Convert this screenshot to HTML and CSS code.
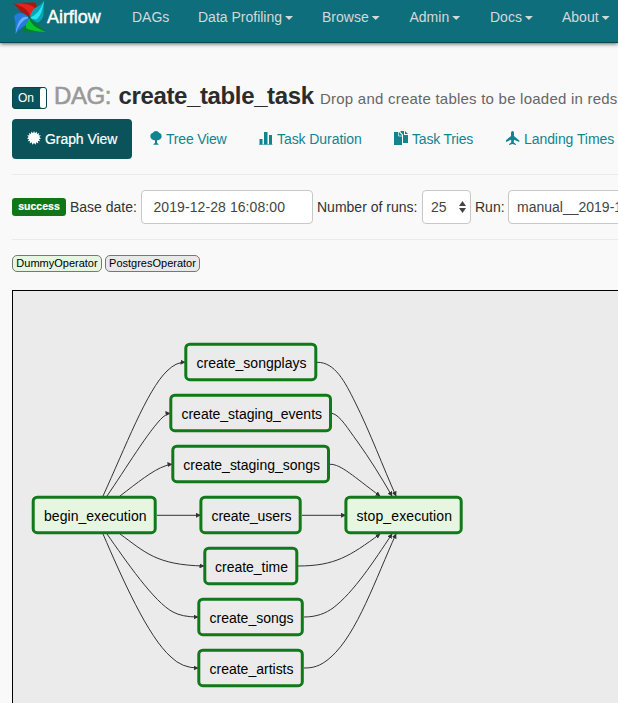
FILE: index.html
```html
<!DOCTYPE html>
<html lang="en">
<head>
<meta charset="utf-8">
<title>Airflow - DAGs</title>
<link rel="stylesheet" href="styles.css">
</head>
<body>
<nav class="navbar">
  <a class="brand"><svg class="logo" width="34" height="35" viewBox="0 0 34 35">
    <path d="M0 3L22 2.500Q25 7 23 11L16.500 17.500Q12 13 8 12Q5 7 0 3z" fill="#a81713"/>
    <path d="M0 3Q15 3 21 7Q24 10 16.500 17.500Q18 9 0 3z" fill="#e1251e"/>
    <path d="M31 1L30.500 15Q29 21 24 23L16.500 17.500Q19 10 22 8Q27 6 31 1z" fill="#0aa5b5"/>
    <path d="M31 1Q29 15 24 19Q20 20 16.500 17.500Q26 15 31 1z" fill="#25e4ef"/>
    <path d="M33 32L12 32.500Q9 30 10 25L16.500 17.500Q20 22 25 23Q28 28 33 32z" fill="#087c37"/>
    <path d="M33 32Q17 31 13 28Q12 23 16.500 17.500Q17 26 33 32z" fill="#05c72d"/>
    <path d="M2.500 34V23L1 16Q5 11 11 14L16.500 17.500Q14 25 10 27Q6 29 2.500 34z" fill="#237bdc"/>
    <path d="M2.500 34Q4 22 9 18Q12 16 16.500 17.500Q6 21 2.500 34z" fill="#69b0fa"/>
    <circle cx="16.500" cy="17.500" r="1.200" fill="#07595f"/>
  </svg><span class="brand-name">Airflow</span></a>
  <ul class="menu">
    <li class="m-dags">DAGs</li>
    <li class="m-profiling">Data Profiling<i class="caret"></i></li>
    <li class="m-browse">Browse<i class="caret"></i></li>
    <li class="m-admin">Admin<i class="caret"></i></li>
    <li class="m-docs">Docs<i class="caret"></i></li>
    <li>About<i class="caret"></i></li>
  </ul>
</nav>
<main class="content">
  <header class="heading">
    <span class="toggle"><span class="toggle-on">On</span><span class="toggle-knob"></span></span>
    <h1><span class="muted">DAG:</span> <span class="dag-name">create_table_task</span></h1>
    <span class="description">Drop and create tables to be loaded in redshift</span>
  </header>
  <ul class="tabs">
    <li class="tab active"><svg width="14" height="14" viewBox="0 0 14 14"><path d="M7 0L8 2.300 9.700.6 10 3 12.200 2 11.500 4.300 14 4.400 12.200 6.100 14 7.500 11.900 8.200 13.300 10.200 10.900 10.100 11.300 12.500 9.200 11.300 8.600 13.700 7 11.900 5.400 13.700 4.800 11.300 2.700 12.500 3.100 10.100.7 10.200 2.100 8.200 0 7.500 1.800 6.100 0 4.400 2.500 4.300 1.800 2 4 3 4.300.6 6 2.300z"/></svg>Graph View</li>
    <li class="tab tree"><svg width="12" height="14" viewBox="0 0 12 14"><path d="M6 0c1.500 0 2.500.8 3 1.800C10.800 2.300 12 4 11.600 6 11.200 8 9 9.500 7 9.200V12l1.500 1v.8h-5V13L5 12V9.200C3 9.500.8 8 .4 6 0 4 1.200 2.300 3 1.800 3.500.8 4.500 0 6 0z"/></svg>Tree View</li>
    <li class="tab duration"><svg width="14" height="14" viewBox="0 0 14 14"><path d="M.5 8h3v5.500h-3zM5 1h3.500v12.500H5zM10 4h3v9.500h-3z"/><path opacity=".5" d="M0 13h13.500v1H0z"/></svg>Task Duration</li>
    <li class="tab tries"><svg width="14" height="14" viewBox="0 0 14 14"><path d="M0 1h5l3 3v10H0zM6.500 0H10v4h4v8H9V3.500L6.500 1z"/><path d="M11 0l3 3h-3z"/><path class="fold" d="M4.500 1v4H8M10.500 0v3.500H14"/></svg>Task Tries</li>
    <li class="tab landing"><svg width="14" height="14" viewBox="0 0 14 14"><path d="M6.500 0c1 0 1.500 1 1.500 2v3l5.300 4.500V11L8 8.800l-.3 2.500 2.300 2V14l-3.500-1L3 14v-.7l2.300-2L5 8.800-.2 11V9.500L5 5V2c0-1 .5-2 1.500-2z"/></svg>Landing Times</li>
  </ul>
  <form class="filters">
    <span class="state">success</span>
    <label class="l-date">Base date:</label><span class="field date">2019-12-28 16:08:00</span>
    <label class="l-runs">Number of runs:</label><span class="field runs">25<svg width="7" height="12" viewBox="0 0 7 12"><path d="M0 5L3.500 0 7 5zM0 7h7L3.500 12z"/></svg></span>
    <label class="l-run">Run:</label><span class="field run">manual__2019-12-28T16:08:00</span>
  </form>
  <div class="legend">
    <span class="operator dummy">DummyOperator</span>
    <span class="operator postgres">PostgresOperator</span>
  </div>
  <div class="graph">
    <svg width="605" height="412" viewBox="13 291 605 412">
      <defs><marker id="arrow" viewBox="0 0 10 10" refX="9" refY="5" markerWidth="5" markerHeight="5" markerUnits="userSpaceOnUse" orient="auto"><path d="M0 0L10 5 0 10z" fill="#333"/></marker></defs>
      <g class="edges">
        <path d="M103 496C125 448 147 390 167 371Q176 362 185 362.300"/>
        <path d="M107 496C125 470 149 430 163 417Q167 413.500 170 413.300"/>
        <path d="M120 496C137 483 153 470 165 466Q169 464.500 172 464.300"/>
        <path d="M157 515.300H200.500"/>
        <path d="M120 534C145 552 156 565 204 566"/>
        <path d="M107 534C126 561 154 602 173 612Q182 617 198 617"/>
        <path d="M103 534C122 578 148 637 171 657Q182 668 198 668"/>
        <path d="M317 362.300C335 362 345 382 355 402C370 432 383 467 396 496"/>
        <path d="M332 413.300C340 415 348 429 357 441C370 459 381 477 392 496"/>
        <path d="M330 464.300C341 464 354 477 380 496"/>
        <path d="M302 515.300H345.500"/>
        <path d="M298 566C335 566 350 556 380 534"/>
        <path d="M304 617C317 617 326 613 333 608C354 592 374 561 392 534"/>
        <path d="M304 668C312 668 320 667 331 657C357 634 376 578 396 534"/>
      </g>
      <g class="nodes">
        <rect class="begin" x="33.200" y="497.200" width="122" height="35.500" rx="4"/>
        <rect x="185.800" y="344.200" width="130" height="35.500" rx="4"/>
        <rect x="170.800" y="395.200" width="159.700" height="35.500" rx="4"/>
        <rect x="172.800" y="446.200" width="155.700" height="35.500" rx="4"/>
        <rect x="200.900" y="497.200" width="99.300" height="35.500" rx="4"/>
        <rect x="204.800" y="548.200" width="92" height="35.500" rx="4"/>
        <rect x="198.800" y="599.200" width="103.500" height="35.500" rx="4"/>
        <rect x="198.800" y="650.200" width="103.500" height="35.500" rx="4"/>
        <rect class="begin" x="345.900" y="497.200" width="115.300" height="35.500" rx="4"/>
      </g>
      <g class="labels">
        <text x="44" y="521" textLength="102.500">begin_execution</text>
        <text x="196.500" y="368" textLength="110">create_songplays</text>
        <text x="181.500" y="419" textLength="140.500">create_staging_events</text>
        <text x="183.300" y="470" textLength="136.700">create_staging_songs</text>
        <text x="211.500" y="521" textLength="80">create_users</text>
        <text x="215" y="572" textLength="73">create_time</text>
        <text x="209.500" y="623" textLength="84">create_songs</text>
        <text x="209.500" y="674" textLength="84">create_artists</text>
        <text x="356.500" y="521" textLength="95.500">stop_execution</text>
      </g>
    </svg>
  </div>
</main>
</body>
</html>
```
FILE: styles.css
```css
* { box-sizing: border-box; }
body { margin: 0; width: 618px; height: 703px; overflow: hidden; background: #f9f9f9; color: #333; font: 14px/20px "Liberation Sans", Arial, sans-serif; white-space: nowrap; }
ul { list-style: none; margin: 0; padding: 0; }
.navbar { display: flex; height: 43px; background: #0f6e7b; border-bottom: 1px solid #084853; box-shadow: 0 1px 4px rgba(50, 25, 25, .7); }
.brand { display: flex; width: 132px; padding-left: 13px; flex: none; color: #fff; }
.logo { flex: none; }
.brand-name { font-size: 18px; line-height: 34px; -webkit-text-stroke: .4px; letter-spacing: -.05px; }
.menu { display: flex; padding-top: 7px; color: #d3d9da; }
.menu li { flex: none; display: flex; }
.m-dags { width: 66px; }
.m-profiling { width: 124px; }
.m-browse { width: 87.500px; }
.m-admin { width: 80.500px; }
.m-docs { width: 72px; }
.caret { width: 8px; height: 4px; margin: 9px 0 0 3px; background: currentColor; clip-path: polygon(0 0, 100% 0, 50% 100%); }
.content { padding-left: 12px; overflow: hidden; padding-top: 39px; }
.heading { display: flex; height: 37px; }
.toggle { display: flex; flex: none; width: 35px; height: 22px; margin-top: 5px; background: #0a535b; border: 1px solid #06454d; border-radius: 3px; color: #fff; font-size: 12px; line-height: 20px; }
.toggle-on { width: 27px; padding-left: 5px; }
.toggle-knob { width: 6px; background: #fff; border-radius: 2px; }
h1 { display: flex; width: 266px; flex: none; margin: 0 0 0 7px; font-size: 24px; line-height: 28px; font-weight: 400; }
.muted { width: 64.500px; color: #999; -webkit-text-stroke: .6px; letter-spacing: -.4px; }
.dag-name { font-weight: 700; font-size: 24px; letter-spacing: -.37px; color: #2b2b2b; }
.description { font-size: 15px; line-height: 34px; letter-spacing: .23px; color: #666; }
.tabs { display: flex; height: 40px; color: #108491; }
.tab { display: flex; align-items: center; gap: 4px; flex: none; letter-spacing: -.07px; }
.tab svg { fill: currentColor; margin-top: -2px; }
.active { width: 120px; padding-left: 15px; background: #0a535b; color: #fff; border-radius: 4px; -webkit-text-stroke: .2px; }
.tree { width: 127px; padding-left: 18px; letter-spacing: -.2px; }
.duration { width: 134px; }
.tries { width: 112px; padding-left: 1px; letter-spacing: -.2px; }
.landing { padding-left: 1px; }
.fold { fill: none; stroke: #f9f9f9; stroke-width: .7; }
.filters { display: flex; align-items: center; height: 66px; margin-top: 15px; border: 1px solid #eaeaea; border-width: 1px 0; }
.state { width: 54px; height: 18px; border-radius: 3px; background: #107718; color: #fff; font-size: 10.500px; font-weight: 700; line-height: 17px; text-align: center; flex: none; -webkit-text-stroke: .2px; }
.filters label { flex: none; margin-top: -1px; }
.l-date { width: 71px; margin-left: 4px; }
.l-runs { width: 105px; margin-left: 4px; }
.l-run { width: 33px; margin-left: 4px; }
.field { display: flex; align-items: center; justify-content: space-between; flex: none; height: 34px; background: #fff; border: 1px solid #c8c8c8; border-radius: 4px; color: #555; }
.date { width: 172px; padding-left: 11.500px; letter-spacing: .08px; color: #444; }
.runs { width: 49px; padding: 0 4px 0 8px; color: #444; line-height: 18px; }
.runs svg { fill: #444; }
.run { width: 240px; padding-left: 8px; color: #444; }
.legend { display: flex; gap: 3px; height: 50px; padding-top: 15px; }
.operator { height: 17px; border: 1px solid #777; border-radius: 5px; color: #000; font-size: 11px; line-height: 15px; text-align: center; }
.dummy { width: 90px; background: #e6f6e1; }
.postgres { width: 95px; background: #e9e9e9; }
.graph { height: 420px; width: 620px; background: #ebebeb; border: 1px solid #000; }
.graph svg { display: block; }
.edges path { fill: none; stroke: #333; stroke-width: 1; marker-end: url(#arrow); }
.nodes rect { fill: #ebebeb; stroke: #107a1b; stroke-width: 3; }
.nodes .begin { fill: #e6f6e1; }
.labels text { font-size: 14px; fill: #000; }
```
